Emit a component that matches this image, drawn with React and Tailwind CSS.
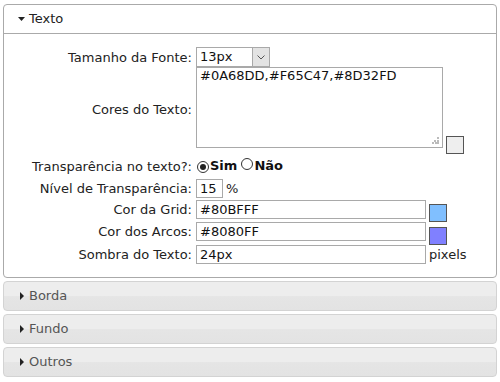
import React from "react";

const font = { fontFamily: '"DejaVu Sans", Verdana, sans-serif' };

function Label({ children }) {
  return (
    <div className="w-[192px] shrink-0 pr-[4px] text-right text-[13px] text-[#222] leading-none">
      {children}
    </div>
  );
}

function TextInput({ value, w }) {
  return (
    <div
      className={`h-[19px] border border-[#a9a9a9] bg-white pl-[3px] text-[13px] leading-[17px] text-[#111] ${w}`}
    >
      {value}
    </div>
  );
}

function Radio({ checked }) {
  return (
    <span className="inline-flex h-[12px] w-[12px] items-center justify-center rounded-full border border-[#333] bg-white">
      {checked && <span className="h-[6px] w-[6px] rounded-full bg-[#222]" />}
    </span>
  );
}

function Collapsed({ title }) {
  return (
    <div className="mt-[3px] flex h-[30px] items-center rounded-[4px] border border-[#d3d3d3] bg-[linear-gradient(#ededed_0%,#ededed_50%,#e5e5e5_52%,#e3e3e3_100%)] pl-[16px]">
      <svg width="5" height="8" viewBox="0 0 5 8" className="mr-[4px]">
        <path d="M0 0 L4 4 L0 8 Z" fill="#222" />
      </svg>
      <span className="text-[13px] text-[#555]">{title}</span>
    </div>
  );
}

export default function App() {
  return (
    <div className="h-[382px] w-[500px] bg-white px-[3px] pt-[4px]" style={font}>
      <div className="rounded-[4px] border border-[#aaa] bg-white">
        <div className="flex h-[29px] items-center border-b border-[#aaa] pl-[14px]">
          <svg width="7" height="5" viewBox="0 0 7 5" className="mr-[4px]">
            <path d="M0 0 L7 0 L3.5 4 Z" fill="#222" />
          </svg>
          <span className="text-[13px] text-[#222]">Texto</span>
        </div>
        <div className="flex flex-col pb-[13px] pt-[13px]">
          <div className="flex h-[20px] items-center">
            <Label>Tamanho da Fonte:</Label>
            <div className="flex h-[20px] w-[74px] border border-[#a9a9a9] bg-white">
              <div className="flex-1 pl-[3px] text-[13px] leading-[18px] text-[#111]">13px</div>
              <div className="flex w-[17px] items-center justify-center border-l border-[#a9a9a9] bg-[#e3e3e3]">
                <svg width="8" height="5" viewBox="0 0 8 5">
                  <path d="M0.5 0.5 L4 4 L7.5 0.5" fill="none" stroke="#555" strokeWidth="1" />
                </svg>
              </div>
            </div>
          </div>
          <div className="flex h-[88px]">
            <div className="flex items-center pb-[4px]">
              <Label>Cores do Texto:</Label>
            </div>
            <div className="relative h-[81px] w-[247px] border border-[#a9a9a9] bg-white pl-[3px] text-[13px] leading-[16px] text-[#111]">
              #0A68DD,#F65C47,#8D32FD
              <svg width="7" height="7" viewBox="0 0 7 7" className="absolute bottom-[3px] right-[3px]">
                <rect x="5" y="0" width="2" height="2" fill="#bbb" />
                <rect x="2" y="3" width="2" height="2" fill="#bbb" />
                <rect x="5" y="3" width="2" height="2" fill="#bbb" />
                <rect x="0" y="5" width="2" height="2" fill="#bbb" />
                <rect x="3" y="5" width="2" height="2" fill="#bbb" />
                <rect x="5" y="5" width="2" height="2" fill="#bbb" />
              </svg>
            </div>
            <div className="ml-[3px] mt-auto mb-[1px] h-[18px] w-[18px] border border-[#555] bg-[#eeeeee]" />
          </div>
          <div className="flex h-[22px] items-center">
            <Label>Transparência no texto?:</Label>
            <div className="flex items-center text-[13px] font-bold text-[#111]">
              <span className="ml-[1px]"><Radio checked /></span>
              <span className="ml-[1px]">Sim</span>
              <span className="ml-[4px]"><Radio /></span>
              <span className="ml-[1px]">Não</span>
            </div>
          </div>
          <div className="mt-[2px] flex h-[19px] items-center">
            <Label>Nível de Transparência:</Label>
            <TextInput value="15" w="w-[27px]" />
            <span className="ml-[3px] text-[13px] text-[#222]">%</span>
          </div>
          <div className="mt-[2px] flex h-[19px] items-start">
            <div className="flex h-[19px] items-center">
              <Label>Cor da Grid:</Label>
            </div>
            <TextInput value="#80BFFF" w="w-[230px]" />
            <div className="ml-[3px] mt-[4px] h-[18px] w-[18px] border border-[#555] bg-[#80BFFF]" />
          </div>
          <div className="mt-[3px] flex h-[19px] items-start">
            <div className="flex h-[19px] items-center">
              <Label>Cor dos Arcos:</Label>
            </div>
            <TextInput value="#8080FF" w="w-[230px]" />
            <div className="ml-[3px] mt-[5px] h-[18px] w-[18px] border border-[#555] bg-[#8080FF]" />
          </div>
          <div className="mt-[4px] flex h-[19px] items-center">
            <Label>Sombra do Texto:</Label>
            <TextInput value="24px" w="w-[230px]" />
            <span className="ml-[3px] text-[13px] text-[#222]">pixels</span>
          </div>
        </div>
      </div>
      <Collapsed title="Borda" />
      <Collapsed title="Fundo" />
      <Collapsed title="Outros" />
    </div>
  );
}
